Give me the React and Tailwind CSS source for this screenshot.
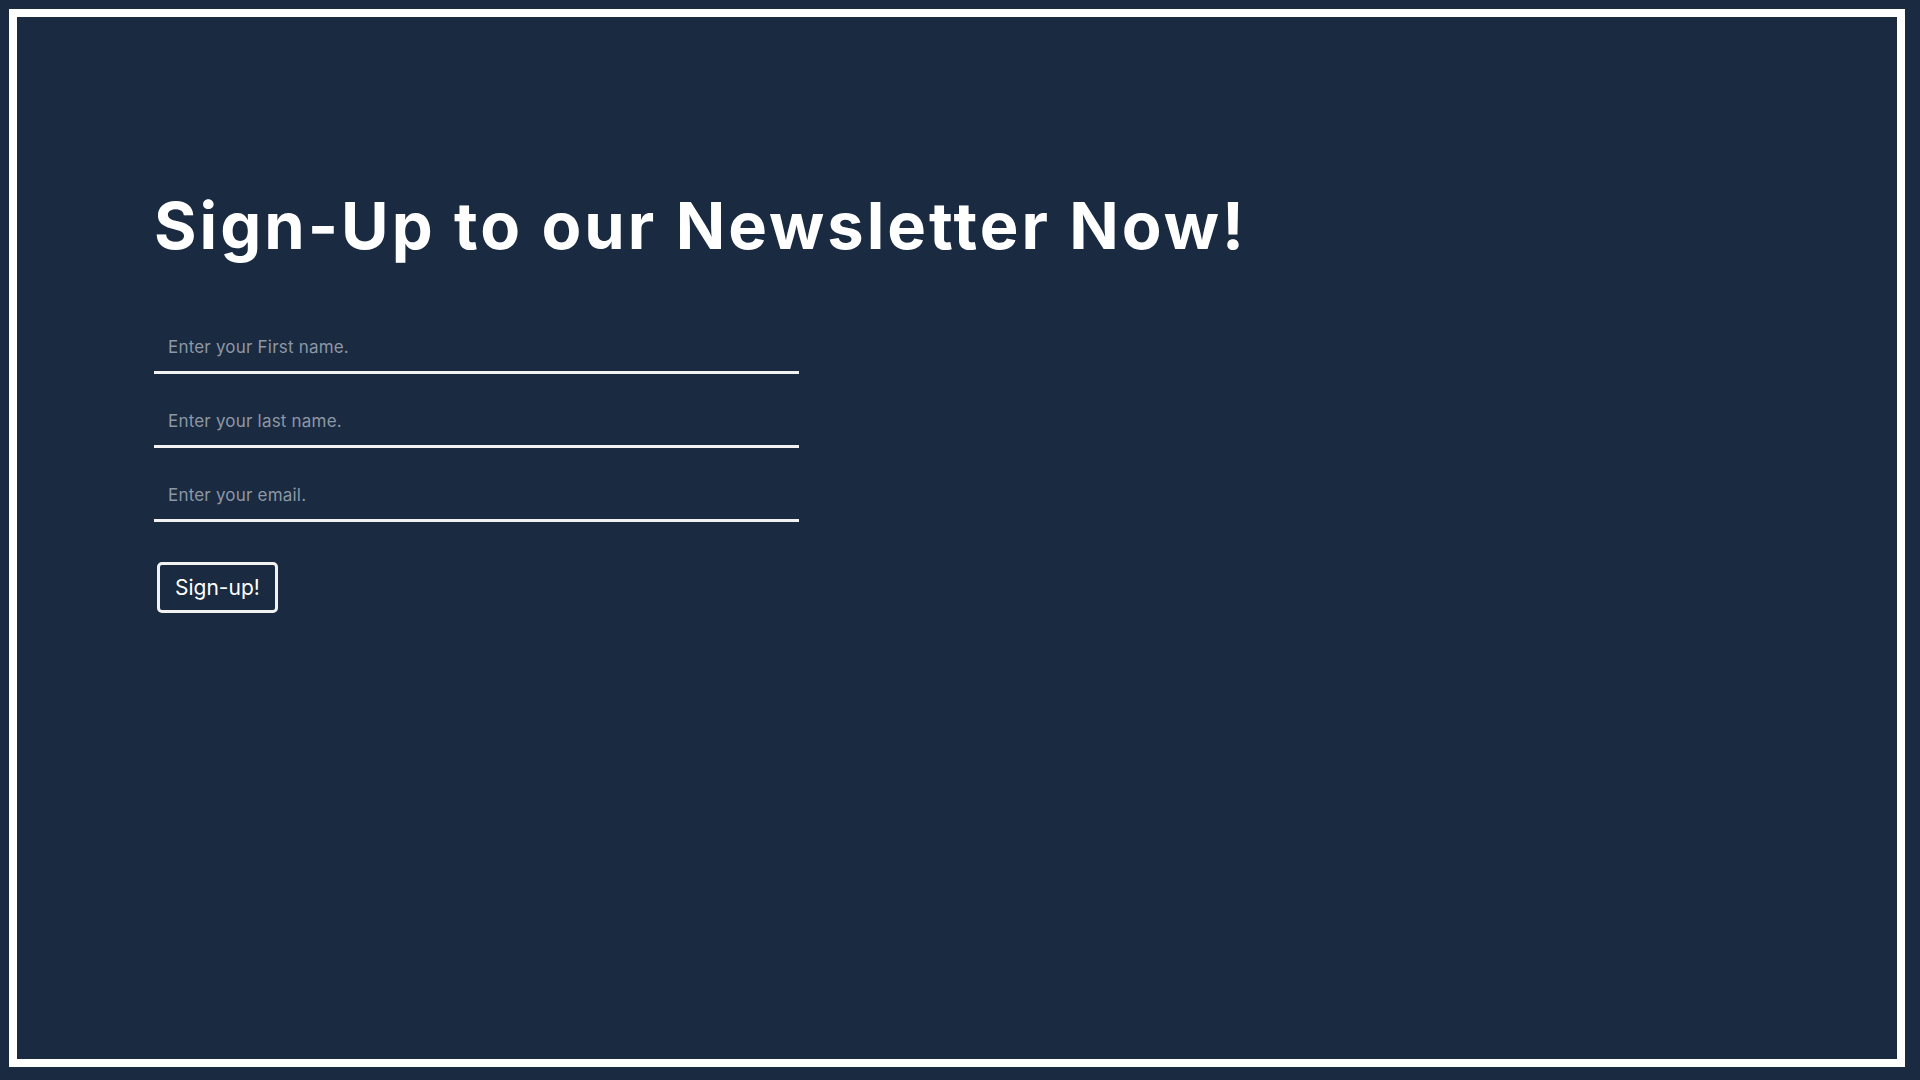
export default function App() {
  const font = { fontFamily: "Inter, 'Liberation Sans', sans-serif" };
  return (
    <div className="w-[1920px] h-[1080px] bg-[#1a2a40] pt-[9px] pl-[9px]" style={font}>
      <div className="w-[1896px] h-[1058px] border-8 border-white pl-[137px] pt-[176px]">
        <h1 className="text-[65px] leading-none font-bold text-white tracking-[3px]">
          Sign-Up to our Newsletter Now!
        </h1>
        <form className="mt-[64px] w-[645px] flex flex-col gap-[22px]" onSubmit={(e) => e.preventDefault()}>
          <input
            type="text"
            placeholder="Enter your First name."
            className="h-[52px] w-full bg-transparent border-b-[3px] border-[#f2f2f2] px-[14px] text-[17px] tracking-[0.2px] text-white placeholder:text-[#8d97a5] outline-none"
          />
          <input
            type="text"
            placeholder="Enter your last name."
            className="h-[52px] w-full bg-transparent border-b-[3px] border-[#f2f2f2] px-[14px] text-[17px] tracking-[0.2px] text-white placeholder:text-[#8d97a5] outline-none"
          />
          <input
            type="email"
            placeholder="Enter your email."
            className="h-[52px] w-full bg-transparent border-b-[3px] border-[#f2f2f2] px-[14px] text-[17px] tracking-[0.2px] text-white placeholder:text-[#8d97a5] outline-none"
          />
          <div className="mt-[18px]">
            <button
              type="submit"
              className="ml-[3px] h-[51px] px-[15px] border-[3px] border-[#f2f2f2] rounded-[5px] text-white text-[21px] bg-transparent"
            >
              Sign-up!
            </button>
          </div>
        </form>
      </div>
    </div>
  );
}
